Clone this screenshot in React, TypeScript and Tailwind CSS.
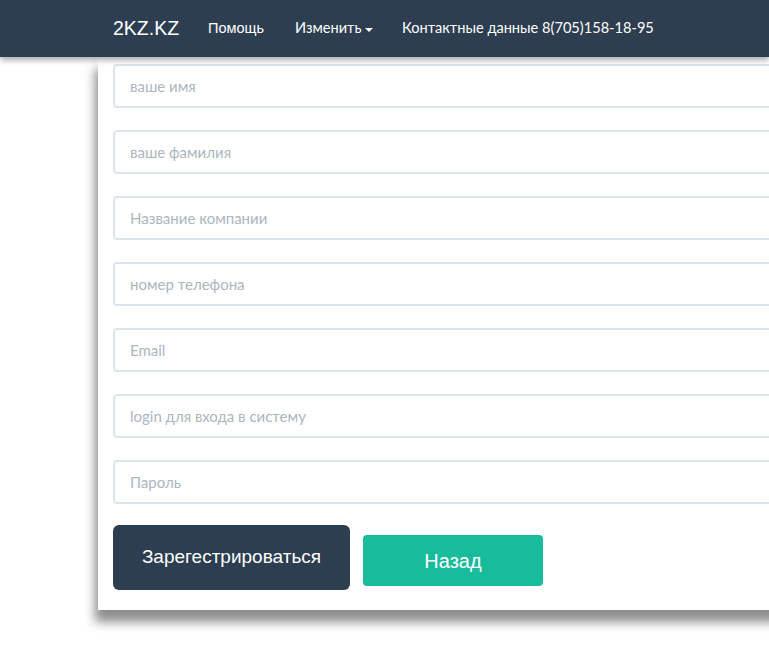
const fields = [
  "ваше имя",
  "ваше фамилия",
  "Название компании",
  "номер телефона",
  "Email",
  "login для входа в систему",
  "Пароль",
];

function Navbar() {
  return (
    <nav className="relative z-10 h-[57px] w-full bg-[#2c3e50] shadow-[0_3px_6px_rgba(0,0,0,0.35)]">
      <div className="flex h-full items-center pl-[113px] text-white">
        <a className="w-[95px] font-['Liberation_Sans',sans-serif] text-[19.5px] leading-none">2KZ.KZ</a>
        <a className="w-[87px] font-['Liberation_Sans',sans-serif] text-[14.5px] leading-none">Помощь</a>
        <a className="flex w-[107px] items-center font-['Lato',sans-serif] text-[14.6px] leading-none">
          Изменить
          <span className="ml-[3px] mt-[2px] h-0 w-0 border-x-[4px] border-t-[4px] border-x-transparent border-t-white" />
        </a>
        <a className="font-['Lato',sans-serif] text-[14.6px] leading-none">
          Контактные данные 8(705)158-18-95
        </a>
      </div>
    </nav>
  );
}

export default function App() {
  return (
    <div className="min-h-screen w-full overflow-hidden bg-white">
      <Navbar />
      <div className="ml-[98px] w-[900px] bg-white px-[15px] pb-[20px] pt-[7px] shadow-[-3px_12px_10px_rgba(0,0,0,0.45)]">
        <form className="flex flex-col gap-[22px]">
          {fields.map((f) => (
            <input
              key={f}
              type={f === "Пароль" ? "password" : "text"}
              placeholder={f}
              className="h-[44px] w-full rounded-[4px] border-2 border-[#dce4ec] bg-white px-[15px] font-['Lato',sans-serif] text-[15px] text-[#2c3e50] outline-none placeholder:text-[#acb6c0]"
            />
          ))}
          <div className="-mt-[1px] flex items-start gap-[13px]">
            <button
              type="button"
              className="h-[65px] w-[237px] rounded-[6px] bg-[#2c3e50] font-['Liberation_Sans',sans-serif] text-[19px] text-white"
            >
              Зарегестрироваться
            </button>
            <button
              type="button"
              className="mt-[10px] h-[51px] w-[180px] rounded-[4px] bg-[#18bc9c] font-['Liberation_Sans',sans-serif] text-[20px] text-white"
            >
              Назад
            </button>
          </div>
        </form>
      </div>
    </div>
  );
}
